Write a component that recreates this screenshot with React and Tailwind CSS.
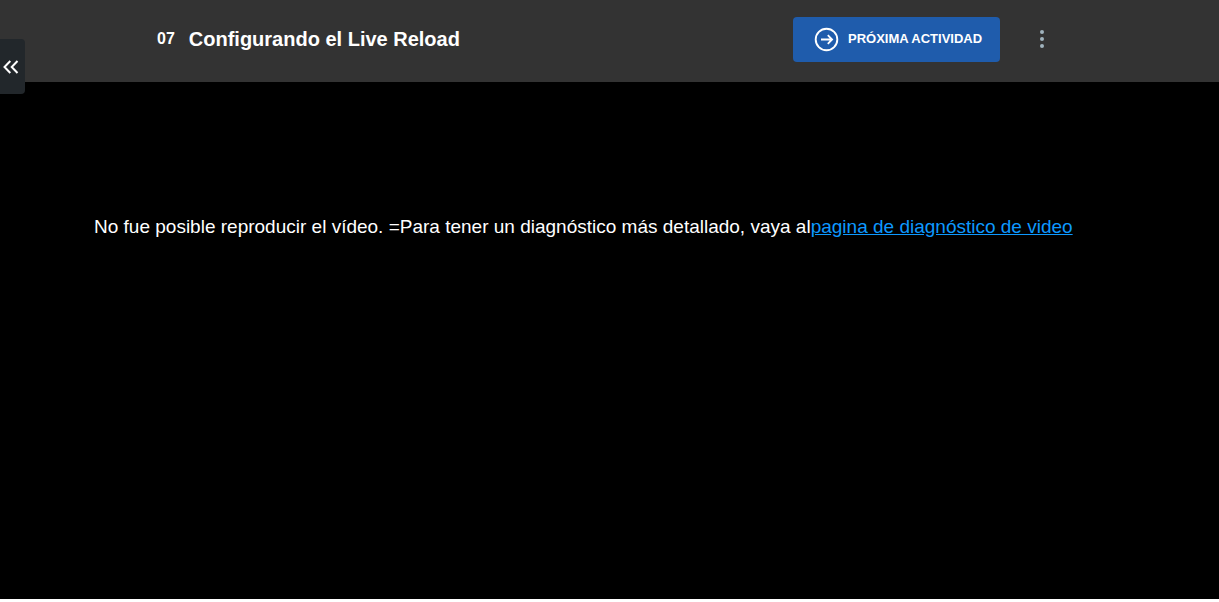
import React from "react";

const Header = () => (
  <header className="bg-[#333333] h-[82px] pl-[157px] pr-[163px] pt-[17px] flex items-start justify-between">
    <h1 className="h-11 flex items-center gap-[14px] text-white font-bold">
      <span className="text-base">07</span>
      <span className="text-[20px]">Configurando el Live Reload</span>
    </h1>

    <div className="flex items-center gap-7">
      <button
        type="button"
        className="h-[45px] w-[207px] pl-[21px] flex items-center gap-[9px] rounded bg-[#1f5cac] text-white whitespace-nowrap"
      >
        <svg
          viewBox="0 0 25 25"
          className="size-[25px] shrink-0"
          fill="none"
          stroke="currentColor"
          aria-hidden="true"
        >
          <circle cx="12.5" cy="12.5" r="10.8" strokeWidth="1.9" />
          <path d="M7 12.5h11M13.8 8.2l4.3 4.3-4.3 4.3" strokeWidth="1.8" />
        </svg>
        <span className="pb-[2px] text-[13px] font-bold">PRÓXIMA ACTIVIDAD</span>
      </button>

      <button
        type="button"
        aria-label="Más opciones"
        className="size-7 flex items-center justify-center text-[#a0b3bd]"
      >
        <svg viewBox="0 0 4 20" className="w-1 h-5" fill="currentColor" aria-hidden="true">
          <circle cx="2" cy="2" r="2" />
          <circle cx="2" cy="9" r="2" />
          <circle cx="2" cy="16" r="2" />
        </svg>
      </button>
    </div>
  </header>
);

const MenuToggle = () => (
  <button
    type="button"
    aria-label="Abrir menú"
    className="absolute left-0 top-[39px] w-[25px] h-[55px] pr-1 flex items-center justify-center rounded-r bg-[#22272b] text-white"
  >
    <svg
      viewBox="0 0 16 14"
      className="w-4 h-[14px]"
      fill="none"
      stroke="currentColor"
      strokeWidth="2"
      aria-hidden="true"
    >
      <path d="M7.3 1L1.5 7l5.8 6M14.5 1L8.7 7l5.8 6" />
    </svg>
  </button>
);

const App = () => {
  return (
    <div className="relative h-[calc(100vh-3px)] flex flex-col bg-black font-['Liberation_Sans',Arial,sans-serif]">
      <Header />
      <MenuToggle />
      <main className="flex-1 pt-[131px] px-[94px]">
        <p className="text-white text-[19px] leading-7">
          No fue posible reproducir el vídeo. =Para tener un diagnóstico más detallado, vaya al
          <a href="#diagnostico" className="text-[#0d99ff] underline">
            pagina de diagnóstico de video
          </a>
        </p>
      </main>
    </div>
  );
};

export default App;
